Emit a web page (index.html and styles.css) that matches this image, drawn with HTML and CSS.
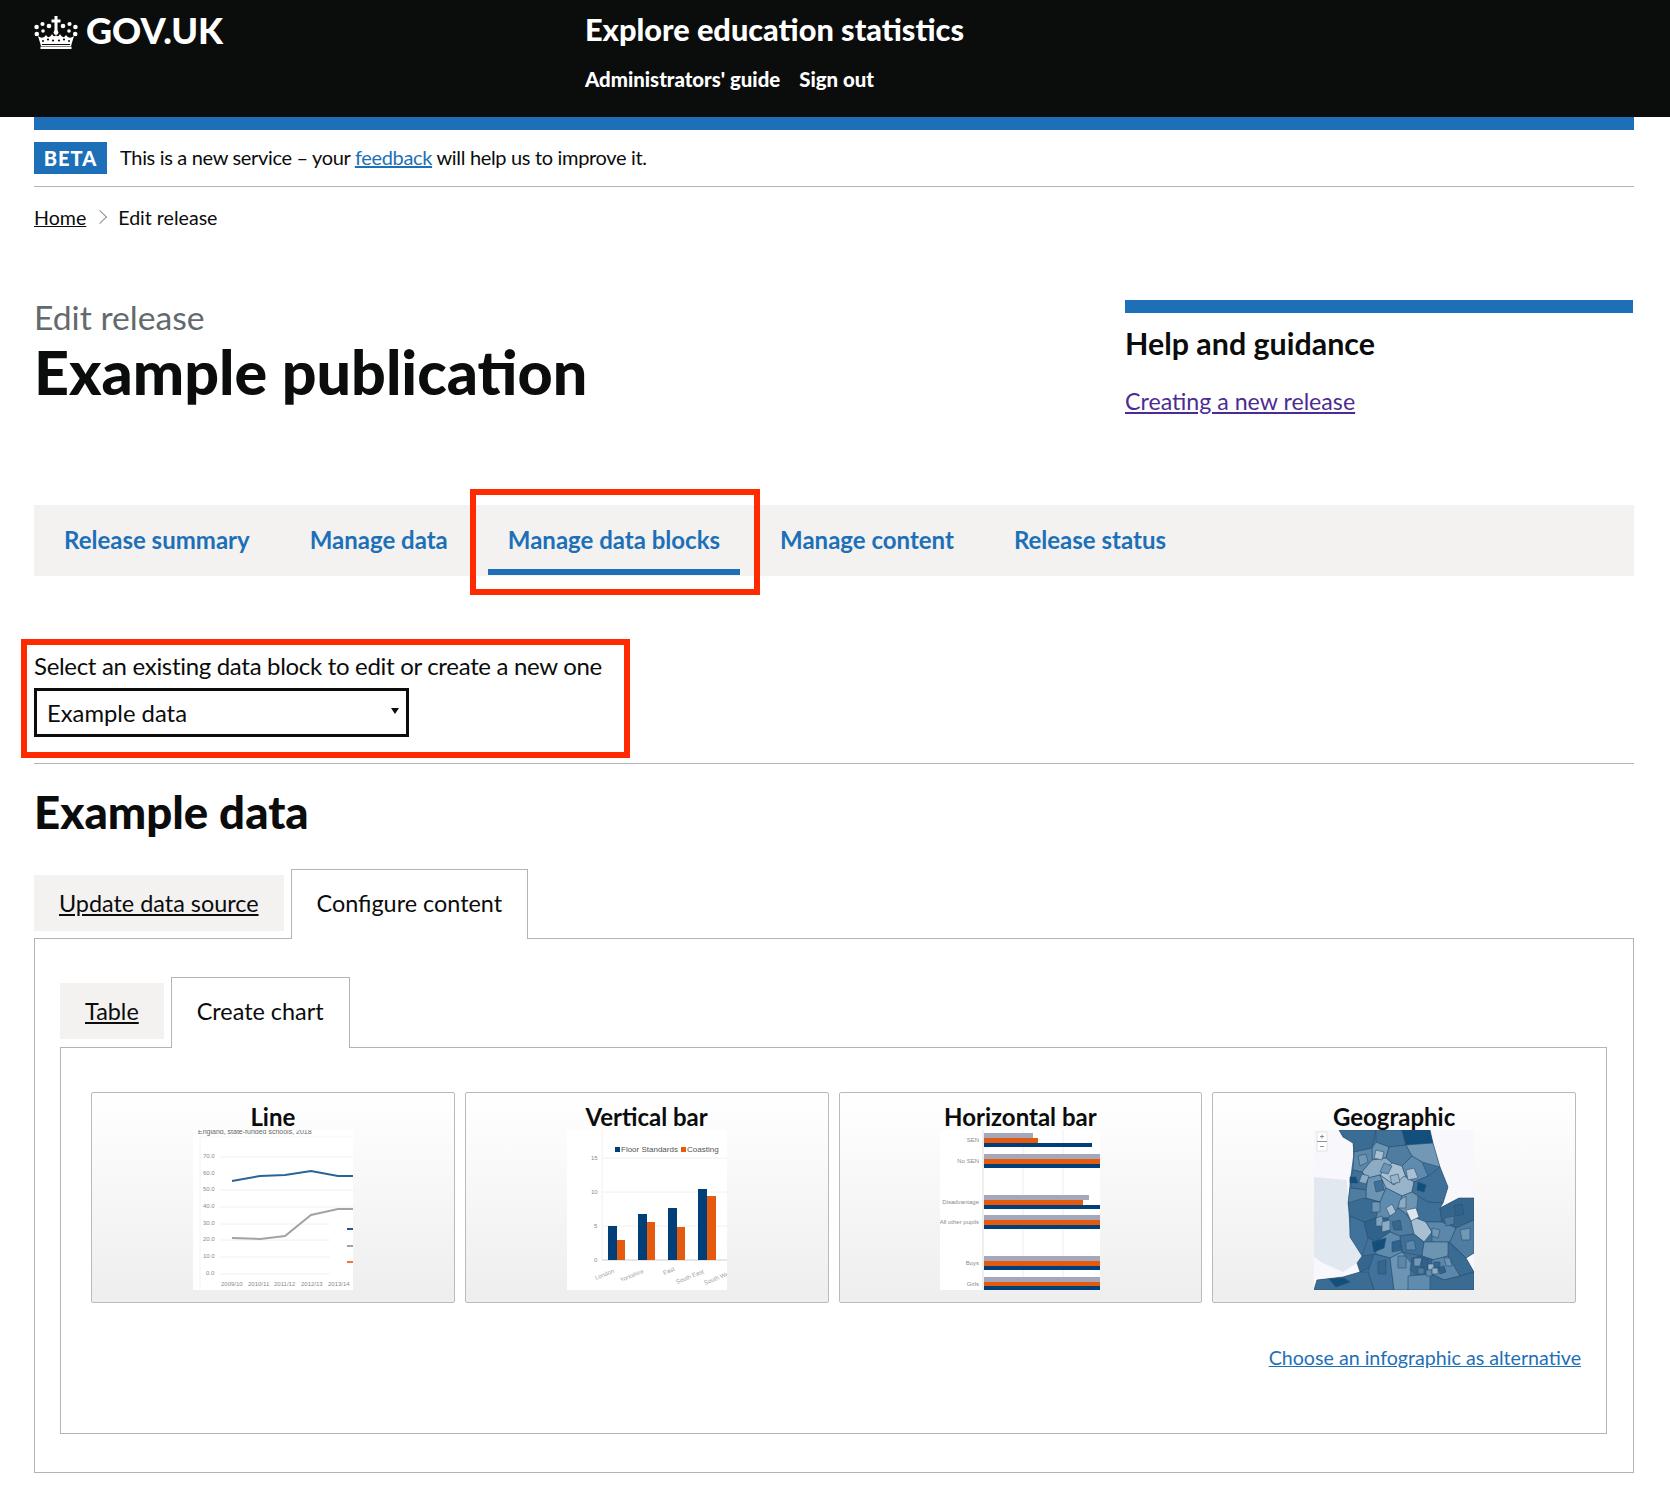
FILE: index.html
```html
<!DOCTYPE html>
<html lang="en">
<head>
    <meta charset="UTF-8">
    <title>Edit release - Explore education statistics</title>
    <link rel="stylesheet" href="styles.css">
</head>
<body>
    <header class="site-header">
        <a class="logo" href="#">
            <svg class="crown" viewBox="0 0 44 33" width="44" height="33">
                <g fill="#fff">
                    <rect x="20.5" y="0" width="3" height="15"/>
                    <rect x="17.5" y="3.5" width="9" height="3"/>
                    <circle cx="2.6" cy="11" r="2.3"/><circle cx="2.8" cy="18" r="2.3"/><circle cx="8.5" cy="8" r="2.1"/>
                    <circle cx="15" cy="10" r="2.3"/><circle cx="29" cy="10" r="2.3"/><circle cx="35.5" cy="8" r="2.1"/>
                    <circle cx="41.4" cy="11" r="2.3"/><circle cx="41.2" cy="18" r="2.3"/><circle cx="22" cy="16.5" r="2.4"/>
                    <circle cx="9" cy="15" r="1.8"/><circle cx="35" cy="15" r="1.8"/>
                    <path d="M7 30L4 20Q9 24 12 19Q15 24 18 18Q20 22 22 19Q24 22 26 18Q29 24 32 19Q35 24 40 20L37 30Z"/>
                    <rect x="6.5" y="30.5" width="31" height="2.5"/>
                </g>
                <g fill="#0b0c0c">
                    <circle cx="9" cy="25" r="1"/><circle cx="14" cy="23.5" r="1.1"/><circle cx="19" cy="24.5" r="1.1"/>
                    <circle cx="25" cy="24.5" r="1.1"/><circle cx="30" cy="23.5" r="1.1"/><circle cx="35" cy="25" r="1"/>
                    <rect x="8" y="28" width="28" height="1"/>
                </g>
            </svg>
            <span>GOV.UK</span>
        </a>
        <div class="service">
            <a class="service-name" href="#">Explore education statistics</a>
            <nav class="service-nav">
                <a href="#">Administrators' guide</a>
                <a href="#">Sign out</a>
            </nav>
        </div>
    </header>

    <div class="page">
        <div class="blue-bar"></div>
        <div class="phase">
            <strong class="tag">BETA</strong>
            <span class="phase-text">This is a new service – your <a href="#">feedback</a> will help us to improve it.</span>
        </div>
        <div class="breadcrumbs">
            <a href="#">Home</a>
            <span class="chevron"></span>
            <span>Edit release</span>
        </div>

        <div class="title-row">
            <div class="title-text">
                <span class="caption">Edit release</span>
                <h1>Example publication</h1>
            </div>
            <aside class="help">
                <h2>Help and guidance</h2>
                <a href="#">Creating a new release</a>
            </aside>
        </div>

        <nav class="release-nav">
            <a href="#">Release summary</a>
            <a href="#">Manage data</a>
            <a href="#" class="current">Manage data blocks</a>
            <a href="#">Manage content</a>
            <a href="#">Release status</a>
        </nav>

        <div class="block-select">
            <label>Select an existing data block to edit or create a new one</label>
            <div class="select-box">Example data<span class="caret"></span></div>
        </div>
        <hr class="rule">

        <h2 class="block-title">Example data</h2>

        <div class="tabs">
            <a href="#" class="tab">Update data source</a>
            <span class="tab selected">Configure content</span>
        </div>
        <div class="panel">
            <div class="tabs">
                <a href="#" class="tab">Table</a>
                <span class="tab selected">Create chart</span>
            </div>
            <div class="panel inner">
                <div class="chart-types">
                    <div class="chart-card">
                        <h3>Line</h3>
                        <svg class="thumb" viewBox="0 0 160 160" width="160" height="160">
                            <rect width="160" height="160" fill="#fff"/>
                            <text x="5" y="4" class="t-small" fill="#666">England, state-funded schools, 2018</text>
                            <path d="M7 7H160M7 7V160" stroke="#f4f4f4" stroke-width="1" fill="none"/>
                            <g stroke="#f0f0f0" stroke-width="1">
                                <path d="M27 27H160M27 60H160M27 77H160"/>
                                <path d="M27 94H137M27 110H137M27 127H137M27 144H137"/>
                            </g>
                            <g class="t-axis" fill="#8a8a8a">
                                <text x="10" y="28">70.0</text><text x="10" y="45">60.0</text><text x="10" y="61">50.0</text>
                                <text x="10" y="78">40.0</text><text x="10" y="95">30.0</text><text x="10" y="111">20.0</text>
                                <text x="10" y="128">10.0</text><text x="13" y="145">0.0</text>
                                <text x="28" y="156">2009/10</text><text x="55" y="156">2010/11</text><text x="81" y="156">2011/12</text>
                                <text x="108" y="156">2012/13</text><text x="135" y="156">2013/14</text>
                            </g>
                            <path d="M39 51L67 46L92 45L118 41L145 46H160" fill="none" stroke="#2a6496" stroke-width="2"/>
                            <path d="M39 108L67 109L92 106L118 85L145 79H160" fill="none" stroke="#a3a3a3" stroke-width="2"/>
                            <path d="M154 99H160" stroke="#1d5a92" stroke-width="2"/>
                            <path d="M154 116H160" stroke="#a3a3a3" stroke-width="2"/>
                            <path d="M154 132H160" stroke="#f47738" stroke-width="2"/>
                        </svg>
                    </div>
                    <div class="chart-card">
                        <h3>Vertical bar</h3>
                        <svg class="thumb" viewBox="0 0 160 160" width="160" height="160">
                            <rect width="160" height="160" fill="#fff"/>
                            <path d="M35 0V130M35 28H160M35 62H160M35 96H160" stroke="#f0f0f0" fill="none"/>
                            <path d="M35 130H160" stroke="#ccc"/>
                            <g class="t-axis" fill="#8a8a8a">
                                <text x="24" y="30">15</text><text x="24" y="64">10</text><text x="27" y="98">5</text><text x="27" y="132">0</text>
                            </g>
                            <rect x="48" y="17" width="5" height="5" fill="#003f78"/>
                            <text x="54" y="22" class="t-legend" fill="#555">Floor Standards</text>
                            <rect x="114" y="17" width="5" height="5" fill="#e45a0e"/>
                            <text x="120" y="22" class="t-legend" fill="#555">Coasting</text>
                            <g fill="#003f78">
                                <rect x="41" y="96" width="9" height="34"/><rect x="71" y="84" width="9" height="46"/>
                                <rect x="101" y="78" width="9" height="52"/><rect x="131" y="59" width="9" height="71"/>
                            </g>
                            <g fill="#e45a0e">
                                <rect x="50" y="110" width="8" height="20"/><rect x="80" y="92" width="8" height="38"/>
                                <rect x="110" y="97" width="8" height="33"/><rect x="140" y="66" width="9" height="64"/>
                            </g>
                            <g class="t-axis" fill="#a0a0a0">
                                <text transform="translate(29,150) rotate(-22)">London</text>
                                <text transform="translate(54,152) rotate(-22)">Yorkshire</text>
                                <text transform="translate(97,145) rotate(-22)">East</text>
                                <text transform="translate(110,154) rotate(-22)">South East</text>
                                <text transform="translate(138,155) rotate(-22)">South West</text>
                            </g>
                        </svg>
                    </div>
                    <div class="chart-card">
                        <h3>Horizontal bar</h3>
                        <svg class="thumb" viewBox="0 0 160 160" width="160" height="160">
                            <rect width="160" height="160" fill="#fff"/>
                            <path d="M43 0V160" stroke="#ddd"/>
                            <path d="M83 0V160M123 0V160" stroke="#eee"/>
                            <g fill="#a5a8bb">
                                <rect x="44" y="3" width="49" height="5"/><rect x="44" y="24" width="116" height="5"/>
                                <rect x="44" y="65" width="105" height="5"/><rect x="44" y="85" width="116" height="5"/>
                                <rect x="44" y="126" width="116" height="5"/><rect x="44" y="147" width="116" height="5"/>
                            </g>
                            <g fill="#e45a0e">
                                <rect x="44" y="8" width="54" height="5"/><rect x="44" y="29" width="116" height="5"/>
                                <rect x="44" y="70" width="99" height="5"/><rect x="44" y="90" width="116" height="5"/>
                                <rect x="44" y="131" width="116" height="5"/><rect x="44" y="152" width="116" height="4"/>
                            </g>
                            <g fill="#003f78">
                                <rect x="44" y="13" width="108" height="4"/><rect x="44" y="34" width="116" height="4"/>
                                <rect x="44" y="75" width="116" height="4"/><rect x="44" y="95" width="116" height="4"/>
                                <rect x="44" y="136" width="116" height="4"/><rect x="44" y="156" width="116" height="4"/>
                            </g>
                            <g class="t-axis" fill="#8a8a8a" text-anchor="end">
                                <text x="39" y="12">SEN</text><text x="39" y="33">No SEN</text><text x="39" y="74">Disadvantage</text>
                                <text x="39" y="94">All other pupils</text><text x="39" y="135">Boys</text><text x="39" y="156">Girls</text>
                            </g>
                        </svg>
                    </div>
                    <div class="chart-card">
                        <h3>Geographic</h3>
                        <svg class="thumb" viewBox="0 0 160 160" width="160" height="160">
                            <rect width="160" height="160" fill="#f7f7fc"/>
                            <path d="M0 47L33 50L36 107L49 127L43 133L29 142L9 133L0 127Z" fill="#e2e8f0"/>
                            <path d="M25 0H116L119 13L126 37L134 57L129 73L126 78L145 68L160 68V123L152 128L160 142V160H0L3 150L29 147L46 142L49 127L36 107L34 73L36 50L39 27L39 13L29 7Z" fill="#41729b"/>
                            <g stroke="#2c4f6e" stroke-width=".6">
                                <path d="M25 0H62L58 18L40 22L39 13L29 7Z" fill="#3b6d94"/>
                                <path d="M62 0H88L92 15L75 17L62 12Z" fill="#3f7097"/>
                                <path d="M88 0H116L119 13L105 17L92 15Z" fill="#124f7d"/>
                                <path d="M58 18L62 12L75 17L72 28L58 30Z" fill="#6c94b3"/>
                                <path d="M75 17L92 15L98 26L88 36L78 33L72 28Z" fill="#4f7da1"/>
                                <path d="M92 15L119 13L126 37L108 32L98 26Z" fill="#7199b6"/>
                                <path d="M40 22L58 18L58 30L48 42L39 40Z" fill="#5a87aa"/>
                                <path d="M58 30L72 28L78 33L66 45L54 48L48 42Z" fill="#8dacc4"/>
                                <path d="M78 33L88 36L92 47L80 55L66 45Z" fill="#a8c0d2"/>
                                <path d="M88 36L98 26L108 32L114 46L100 52L92 47Z" fill="#5f8cae"/>
                                <path d="M39 40L48 42L54 48L52 60L38 58L36 50Z" fill="#3f7097"/>
                                <path d="M36 47L42 47L44 53L36 53Z" fill="#124f7d"/>
                                <path d="M54 48L66 45L72 58L66 72L52 68L52 60Z" fill="#6c94b3"/>
                                <path d="M66 45L80 55L90 46L100 52L98 62L88 66L72 58Z" fill="#97b4ca"/>
                                <path d="M100 52L114 46L126 37L134 57L129 73L114 72L104 66L98 62Z" fill="#3f7097"/>
                                <path d="M36 58L52 60L52 68L50 80L34 73Z" fill="#4f7da1"/>
                                <path d="M50 68L66 72L62 88L50 92L36 86L34 73Z" fill="#3a6c93"/>
                                <path d="M66 72L72 58L88 66L84 78L74 88L62 88Z" fill="#5f8cae"/>
                                <path d="M88 66L98 62L104 66L112 76L102 88L92 84L84 78Z" fill="#6c94b3"/>
                                <path d="M104 66L114 72L129 73L126 78L128 92L112 92L102 88Z" fill="#3f7097"/>
                                <path d="M126 78L145 68L160 68V90L142 98L128 92Z" fill="#35668e"/>
                                <path d="M36 86L50 92L54 108L48 126L36 107Z" fill="#41729b"/>
                                <path d="M50 92L62 88L74 88L76 102L62 112L54 108Z" fill="#2f638d"/>
                                <path d="M74 88L84 78L92 84L97 91L100 104L86 106L76 102Z" fill="#4f7da1"/>
                                <path d="M97 91L102 88L112 92L118 102L110 112L100 104Z" fill="#a8c0d2"/>
                                <path d="M112 92L128 92L142 98L136 112L118 112L118 102Z" fill="#5a87aa"/>
                                <path d="M142 98L160 90V123L152 128L136 112Z" fill="#4f7da1"/>
                                <path d="M62 112L76 102L86 106L88 122L76 128L62 124Z" fill="#5f8cae"/>
                                <path d="M86 106L100 104L110 112L108 126L88 122Z" fill="#3f7097"/>
                                <path d="M110 112L118 112L136 112L134 126L120 130L108 126Z" fill="#6c94b3"/>
                                <path d="M134 112L152 128L160 142L146 146L134 126Z" fill="#3a6c93"/>
                                <path d="M48 126L62 124L60 136L46 142L43 133Z" fill="#35668e"/>
                                <path d="M60 124L76 128L80 160H60L54 142Z" fill="#41729b"/>
                                <path d="M76 128L88 122L98 134L94 160H80Z" fill="#6c94b3"/>
                                <path d="M98 128L108 126L120 130L118 144L104 146L96 140Z" fill="#35668e"/>
                                <path d="M118 130L134 126L146 146L130 150L118 144Z" fill="#5a87aa"/>
                                <path d="M94 146L118 144L116 160H94Z" fill="#5f8cae"/>
                                <path d="M116 144L130 150L146 146L160 142V160H116Z" fill="#3a6c93"/>
                                <path d="M3 150L29 147L46 142L54 142L60 160H0Z" fill="#3b6d94"/>
                                <path d="M15 149L30 148L36 152L22 157Z" fill="#124f7d"/>
                                <!-- smaller districts -->
                                <path d="M44 26L52 24L54 32L46 36Z" fill="#7199b6"/>
                                <path d="M62 20L70 22L68 30L60 28Z" fill="#a8c0d2"/>
                                <path d="M70 33L78 36L74 44L66 42Z" fill="#6c94b3"/>
                                <path d="M48 44L55 46L52 54L45 52Z" fill="#8dacc4"/>
                                <path d="M76 46L84 44L86 52L78 54Z" fill="#97b4ca"/>
                                <path d="M60 52L68 50L70 60L62 62Z" fill="#3f7097"/>
                                <path d="M92 40L100 38L104 48L94 50Z" fill="#a8c0d2"/>
                                <path d="M104 52L112 55L110 62L103 60Z" fill="#124f7d"/>
                                <path d="M86 70L92 66L92 78L84 78Z" fill="#8dacc4"/>
                                <path d="M72 78L78 74L82 82L76 86Z" fill="#a8c0d2"/>
                                <path d="M92 80L102 78L105 87L97 91Z" fill="#dde6ec"/>
                                <path d="M58 72L66 72L66 82L58 82Z" fill="#6c94b3"/>
                                <path d="M62 88L68 86L70 96L62 96Z" fill="#7fa3bd"/>
                                <path d="M68 92L76 90L76 100L68 102Z" fill="#8dacc4"/>
                                <path d="M78 92L86 90L88 100L80 100Z" fill="#35668e"/>
                                <path d="M118 98L126 100L124 108L118 106Z" fill="#7199b6"/>
                                <path d="M58 112L72 108L70 118L60 122Z" fill="#124f7d"/>
                                <path d="M92 112L100 110L102 120L92 120Z" fill="#5a87aa"/>
                                <path d="M78 112L86 110L88 120L78 122Z" fill="#2f638d"/>
                                <path d="M100 128L108 128L106 136L100 136Z" fill="#7199b6"/>
                                <path d="M108 128L114 130L114 138L108 138Z" fill="#2f638d"/>
                                <path d="M114 134L120 134L120 140L114 140Z" fill="#97b4ca"/>
                                <path d="M120 132L126 132L126 138L120 138Z" fill="#35668e"/>
                                <path d="M112 140L118 140L118 146L112 146Z" fill="#5f8cae"/>
                                <path d="M118 138L124 138L124 144L118 144Z" fill="#8dacc4"/>
                                <path d="M124 138L130 136L132 142L126 144Z" fill="#2f638d"/>
                                <path d="M104 138L110 138L110 144L104 144Z" fill="#4f7da1"/>
                                <path d="M130 128L136 128L138 136L132 136Z" fill="#6c94b3"/>
                                <path d="M64 132L72 130L72 144L64 144Z" fill="#35668e"/>
                                <path d="M84 126L92 126L92 138L84 138Z" fill="#5a87aa"/>
                                <path d="M140 76L148 74L150 84L142 86Z" fill="#2f638d"/>
                                <path d="M130 88L140 86L140 94L132 96Z" fill="#4f7da1"/>
                                <path d="M146 100L156 98L156 110L148 110Z" fill="#7199b6"/>
                            </g>
                            <rect x="3" y="2" width="10" height="19" fill="#fff" stroke="#ccc" stroke-width=".5"/>
                            <path d="M3 11.5H13M6 6.5H10M8 4.5V8.5M6 16.5H10" stroke="#666" stroke-width=".7"/>
                        </svg>
                    </div>
                </div>
                <div class="alt-link"><a href="#">Choose an infographic as alternative</a></div>
            </div>
        </div>
    </div>
</body>
</html>
```
FILE: styles.css
```css
body {
    margin: 0;
    font-family: Lato, "Noto Sans", sans-serif;
    color: #0b0c0c;
    background: #fff;
    font-size: 21px;
}
a { color: #1d70b8; }

.site-header {
    background: #0b0c0c;
    height: 117px;
    padding-left: 34px;
    display: flex;
    box-sizing: border-box;
}
.site-header a { color: #fff; text-decoration: none; font-weight: 900; }
.logo {
    display: flex;
    align-items: flex-start;
    gap: 8px;
    width: 551px;
    height: 60px;
    padding-top: 8px;
    box-sizing: border-box;
    font-size: 36px;
    line-height: 44px;
}
.crown { margin-top: 8px; }
.service { padding-top: 11px; }
.service-name { font-size: 30.7px; display: block; margin-bottom: 19px; }
.service-nav { display: flex; gap: 19px; font-size: 20.4px; }

.page { margin: 0 36px 0 34px; }
.blue-bar { height: 13px; background: #1d70b8; }

.phase {
    display: flex;
    align-items: center;
    gap: 13px;
    height: 57px;
    box-sizing: border-box;
    border-bottom: 1px solid #b1b4b6;
    font-size: 20px;
    letter-spacing: -0.33px;
}
.phase-text { padding-bottom: 2px; }
.tag {
    background: #1d70b8;
    color: #fff;
    font-size: 20px;
    font-weight: 900;
    letter-spacing: 1px;
    width: 73px;
    height: 32px;
    line-height: 32px;
    text-align: center;
}
.breadcrumbs {
    display: flex;
    align-items: center;
    height: 60px;
    font-size: 19.6px;
}
.breadcrumbs a { color: #0b0c0c; }
.chevron {
    width: 9px;
    height: 9px;
    border-top: 1px solid #8a8f92;
    border-right: 1px solid #8a8f92;
    transform: rotate(45deg);
    margin: 0 13px 0 9px;
}

.title-row {
    display: flex;
    justify-content: space-between;
    height: 258px;
    padding-top: 53px;
    box-sizing: border-box;
}
.title-text { margin-top: -3px; }
.caption { font-size: 33.7px; color: #626a6e; display: block; }
h1 { font-size: 61px; margin: 0; line-height: 70px; font-weight: 900; }
.help {
    width: 508px;
    border-top: 13px solid #1d70b8;
    height: 110px;
    margin-right: 1px;
}
.help h2 { font-size: 30.4px; margin: 12px 0 26px; line-height: 36px; }
.help a { font-size: 23.2px; color: #4c2c92; }

.release-nav {
    background: #f3f2f1;
    height: 71px;
    display: flex;
    padding-left: 30px;
    font-size: 24px;
    font-weight: 700;
}
.release-nav a {
    text-decoration: none;
    padding: 20px 0 0;
    margin-right: 60px;
    position: relative;
}
.release-nav a.current::after {
    content: "";
    position: absolute;
    left: -20px;
    right: -20px;
    bottom: 1px;
    height: 6px;
    background: #1d70b8;
}
.release-nav a.current::before {
    content: "";
    position: absolute;
    left: -38px;
    right: -40px;
    top: -16px;
    bottom: -19px;
    border: 6px solid #ff2a00;
}

.block-select {
    margin-top: 69px;
    height: 107px;
    outline: 6px solid #ff2a00;
    margin-left: -7px;
    width: 597px;
    padding: 5px 0 0 7px;
    box-sizing: border-box;
}
.block-select label { font-size: 24px; display: block; line-height: 32px; letter-spacing: -0.31px; }
.select-box {
    margin-top: 6px;
    width: 375px;
    height: 49px;
    border: 3px solid #0b0c0c;
    box-sizing: border-box;
    padding-left: 10px;
    font-size: 23.8px;
    line-height: 44px;
    position: relative;
}
.caret {
    position: absolute;
    right: 7px;
    top: 17px;
    border: 4px solid transparent;
    border-top: 6px solid #0b0c0c;
    border-bottom: 0;
}
.rule { border: 0; border-top: 1px solid #b1b4b6; margin: 11px 0 0; }
.block-title { font-size: 45.6px; margin: 21px 0 30px; line-height: 54px; font-weight: 900; }

.tabs { display: flex; align-items: flex-end; gap: 7px; }
.tab {
    background: #f3f2f1;
    color: #0b0c0c;
    padding: 0 25px;
    height: 56px;
    line-height: 56px;
    font-size: 23.4px;
    margin-bottom: 7px;
}
.tab.selected {
    background: #fff;
    border: 1px solid #b1b4b6;
    border-bottom: 0;
    height: 69px;
    line-height: 66px;
    margin-bottom: -1px;
    position: relative;
}
.panel {
    border: 1px solid #b1b4b6;
    padding: 38px 26px 38px 25px;
    height: 535px;
    box-sizing: border-box;
}
.panel .tab { margin-bottom: 8px; }
.panel .tab.selected { height: 70px; margin-bottom: -1px; }
.panel.inner {
    padding: 44px 30px 0;
    height: 387px;
}

.chart-types {
    display: grid;
    grid-template-columns: repeat(4, 1fr);
    gap: 10px;
}
.chart-card {
    height: 211px;
    box-sizing: border-box;
    border: 1px solid #bbb;
    border-radius: 2px;
    background: linear-gradient(#fff, #eee);
    display: flex;
    flex-direction: column;
    align-items: center;
    padding-top: 11px;
}
.chart-card h3 { font-size: 24px; margin: 0; line-height: 26px; height: 26px; }
.thumb { display: block; }
.t-small { font: 7px Arial, "Liberation Sans", sans-serif; }
.t-axis { font: 6px "Liberation Sans", sans-serif; }
.t-legend { font: 8px "Liberation Sans", sans-serif; }
.alt-link {
    text-align: right;
    margin: 43px -5px 0 0;
    font-size: 19.65px;
}
```
